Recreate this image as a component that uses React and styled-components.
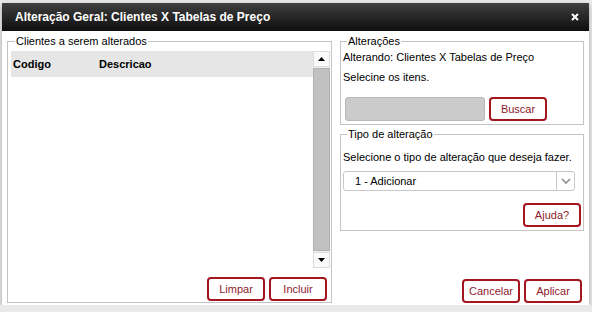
import React from 'react'
import styled, { createGlobalStyle } from 'styled-components'

const GlobalStyle = createGlobalStyle`
  html, body {
    margin: 0;
    padding: 0;
    background: #e9e9e9;
    font-family: "Liberation Sans", Arial, sans-serif;
  }
`;

const Window = styled.div`
  width: 587px;
  height: 302px;
  margin: 3px 0 0 2px;
  background: #fff;
  display: flex;
  flex-direction: column;
  box-shadow: 0 2px 5px rgba(0,0,0,0.3);
`;

const TitleBar = styled.div`
  height: 28px;
  flex-shrink: 0;
  display: flex;
  align-items: center;
  justify-content: space-between;
  padding: 0 10px 0 13px;
  background: linear-gradient(to bottom, #3f3f3f, #0e0e0e);
  color: #fff;
  font-size: 12px;
  font-weight: bold;
`;

const Close = styled.svg`
  width: 8px;
  height: 8px;
`;

const Body = styled.div`
  flex: 1;
  display: flex;
  gap: 8px;
  padding: 4px 5px 2px 5px;
`;

const Fieldset = styled.fieldset`
  margin: ${p => p.$mt || 0}px 0 0 0;
  border: 1px solid #c4c4c4;
  box-sizing: border-box;
  min-width: 0;
  display: flex;
  flex-direction: column;
  padding: ${p => p.$pad};
  height: ${p => p.$h}px;
  width: ${p => p.$w ? p.$w + 'px' : 'auto'};
`;

const Legend = styled.legend`
  font-size: 11px;
  line-height: 13px;
  padding: 0 1px;
  margin-left: 4px;
  color: #000;
`;

const ListBox = styled.div`
  height: 217px;
  display: flex;
`;

const Table = styled.div`
  flex: 1;
`;

const HeaderRow = styled.div`
  height: 26px;
  background: #e6e6e6;
  display: flex;
  align-items: center;
  font-size: 11px;
  font-weight: bold;
  padding-left: 2px;
`;

const Col = styled.span`
  width: ${p => p.$w}px;
`;

const Scrollbar = styled.div`
  width: 17px;
  display: flex;
  flex-direction: column;
  background: #f0f0f0;
`;

const ScrollBtn = styled.div`
  height: 16px;
  box-sizing: border-box;
  border: 1px solid #dcdcdc;
  background: #fafafa;
  display: flex;
  align-items: center;
  justify-content: center;
`;

const Thumb = styled.div`
  flex: 1;
  margin: 1px 0;
  background: #c1c1c1;
  border: 1px solid #b0b0b0;
`;

const ButtonRow = styled.div`
  display: flex;
  justify-content: flex-end;
  gap: 4px;
  margin-top: ${p => p.$mt || 0}px;
  margin-right: ${p => p.$mr || 0}px;
`;

const Button = styled.button`
  width: 58px;
  height: 24px;
  box-sizing: border-box;
  border: 2px solid #a3151f;
  border-radius: 4px;
  background: #fff;
  color: #8e1a2c;
  font-family: "Liberation Sans", Arial, sans-serif;
  font-size: 11px;
  padding: 0;
`;

const RightCol = styled.div`
  width: 244px;
  display: flex;
  flex-direction: column;
`;

const Text = styled.div`
  font-size: 11px;
  line-height: 13px;
  margin-top: ${p => p.$mt || 0}px;
  color: #000;
`;

const SearchRow = styled.div`
  display: flex;
  gap: 4px;
  margin: 13px 0 0 2px;
`;

const GrayInput = styled.div`
  width: 140px;
  height: 24px;
  box-sizing: border-box;
  background: #cbcbcb;
  border: 1px solid #b8b8b8;
  border-radius: 3px;
`;

const Select = styled.div`
  width: 232px;
  height: 20px;
  box-sizing: border-box;
  margin-top: 7px;
  border: 1px solid #c8c8c8;
  border-radius: 3px;
  display: flex;
  align-items: center;
  font-size: 11px;
`;

const SelectValue = styled.span`
  flex: 1;
  padding-left: 11px;
`;

const SelectArrow = styled.span`
  width: 17px;
  height: 100%;
  border-left: 1px solid #c8c8c8;
  display: flex;
  align-items: center;
  justify-content: center;
`;

const Spacer = styled.div`
  flex: 1;
`;

const Tri = ({ down }) => (
  <svg width="7" height="4" viewBox="0 0 7 4">
    <polygon points={down ? '0,0 7,0 3.5,4' : '0,4 7,4 3.5,0'} fill="#000" />
  </svg>
);

export default function App() {
  return (
    <>
      <GlobalStyle />
      <Window>
        <TitleBar>
          <span>Alteração Geral: Clientes X Tabelas de Preço</span>
          <Close viewBox="0 0 8 8">
            <path d="M1 1 L7 7 M7 1 L1 7" stroke="#fff" strokeWidth="2" />
          </Close>
        </TitleBar>
        <Body>
          <Fieldset $w={325} $h={268} $pad="3px 1px 1px 3px">
            <Legend>Clientes a serem alterados</Legend>
            <ListBox>
              <Table>
                <HeaderRow>
                  <Col $w={86}>Codigo</Col>
                  <Col>Descricao</Col>
                </HeaderRow>
              </Table>
              <Scrollbar>
                <ScrollBtn><Tri /></ScrollBtn>
                <Thumb />
                <ScrollBtn><Tri down /></ScrollBtn>
              </Scrollbar>
            </ListBox>
            <ButtonRow $mt={9} $mr={3}>
              <Button>Limpar</Button>
              <Button>Incluir</Button>
            </ButtonRow>
          </Fieldset>
          <RightCol>
            <Fieldset $h={90} $pad="3px 2px 3px 2px">
              <Legend>Alterações</Legend>
              <Text>Alterando: Clientes X Tabelas de Preço</Text>
              <Text $mt={7}>Selecine os itens.</Text>
              <SearchRow>
                <GrayInput />
                <Button>Buscar</Button>
              </SearchRow>
            </Fieldset>
            <Fieldset $mt={3} $h={103} $pad="10px 2px 3px 2px">
              <Legend>Tipo de alteração</Legend>
              <Text>Selecione o tipo de alteração que deseja fazer.</Text>
              <Select>
                <SelectValue>1 - Adicionar</SelectValue>
                <SelectArrow>
                  <svg width="10" height="6" viewBox="0 0 10 6">
                    <path d="M1 1 L5 5 L9 1" stroke="#8a8a8a" strokeWidth="1.6" fill="none" />
                  </svg>
                </SelectArrow>
              </Select>
              <ButtonRow $mt={12}>
                <Button>Ajuda?</Button>
              </ButtonRow>
            </Fieldset>
            <Spacer />
            <ButtonRow $mr={2}>
              <Button>Cancelar</Button>
              <Button>Aplicar</Button>
            </ButtonRow>
          </RightCol>
        </Body>
      </Window>
    </>
  )
}
